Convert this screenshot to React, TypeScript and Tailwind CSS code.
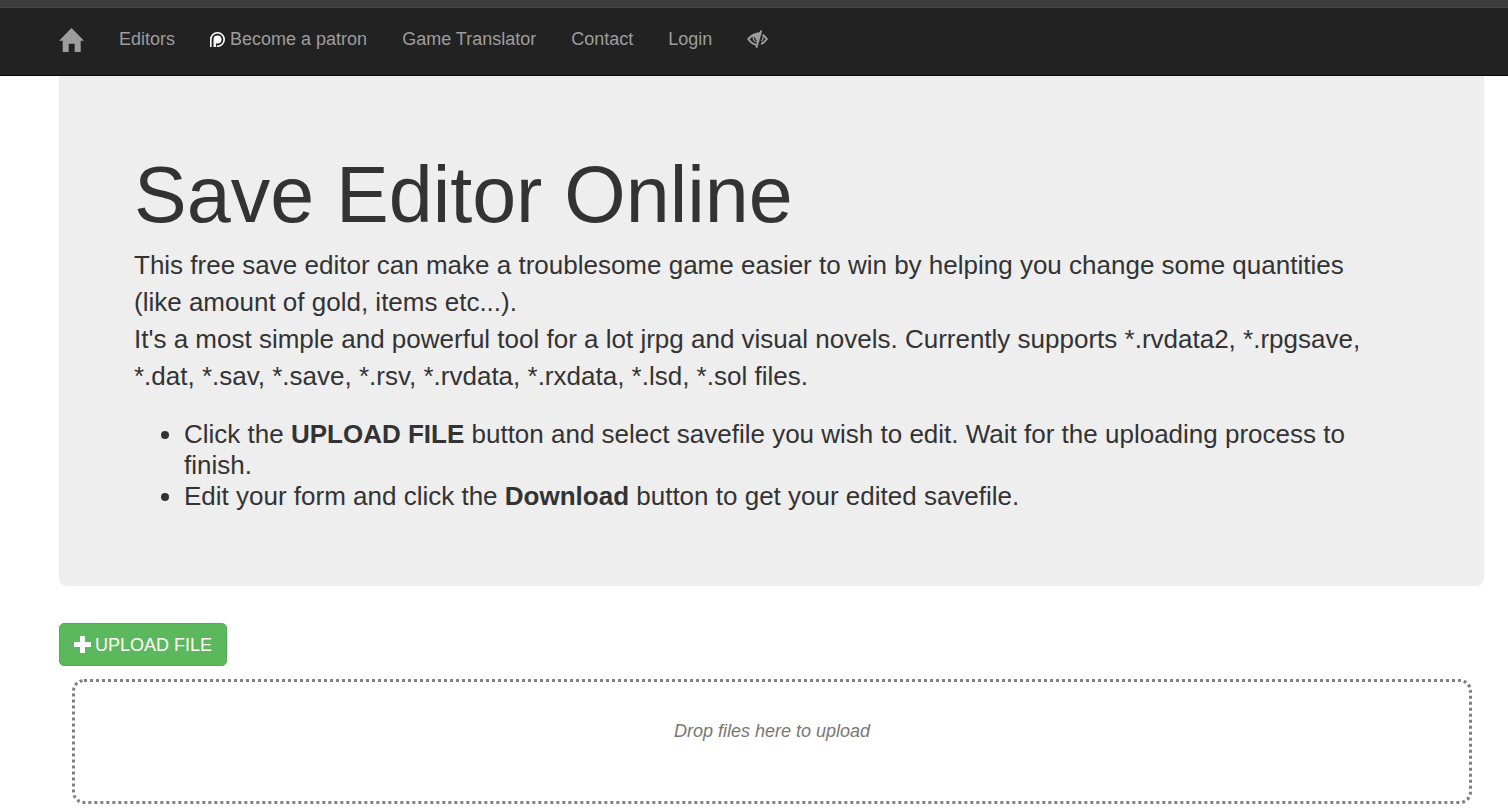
import type { ReactNode } from 'react';

const links = ['Game Translator', 'Contact', 'Login'];

function HomeIcon() {
  return (
    <svg viewBox="0 0 25 24" className="w-[25px] h-6" fill="currentColor" aria-hidden="true">
      <path d="M12.5 0 25 12.7h-3.3V24h-6v-8.3h-6V24h-6V12.7H0z" />
    </svg>
  );
}

function PatreonIcon() {
  return (
    <svg viewBox="0 0 15 15" className="w-[15px] h-[15px] text-white" aria-hidden="true">
      <path d="M.8 15V7.500A6.700 6.700 0 1 1 7.500 14.200H6.800" fill="none" stroke="currentColor" strokeWidth="1.6" />
      <path d="M3.500 15V7.500a4 4 0 1 1 4 4c-.6 0-1.100-.1-1.500-.3V15z" fill="currentColor" />
    </svg>
  );
}

function EyeCloseIcon() {
  return (
    <svg viewBox="0 0 21 18" className="w-[21px] h-[18px]" fill="none" stroke="currentColor" aria-hidden="true">
      <path d="M7 4.500C4.700 5.600 2.900 7.200 1.300 9c1.800 2.600 4.500 5.200 8 5.800M15.700 4.700C17.400 5.900 18.700 7.500 19.800 9c-1.400 2-3.300 4-5.600 5.100" strokeWidth="2" />
      <path d="M13.700 2.300 10.800 12.500C7.400 12.300 5.600 10.200 5.600 7.900c0-.9.200-1.700.6-2.500L4 6.200c2.600-2.600 5.900-4.200 9.700-3.900z" fill="currentColor" stroke="none" />
      <path d="M7.500 7.200c-.2 1.600.7 3 2.200 3.600" stroke="#222" strokeWidth="1.100" />
      <path d="M14.200.4 9.400 17.700" strokeWidth="2" />
      <path d="M15.900 6.500c.3 1.800-.3 3.400-1.700 4.600" strokeWidth="1.200" />
    </svg>
  );
}

function NavLink({ children }: { children: ReactNode }) {
  return (
    <a href="#" className="flex items-center gap-[5px] whitespace-nowrap hover:text-white">
      {children}
    </a>
  );
}

export default function App() {
  return (
    <div className="bg-white font-['Liberation_Sans',Arial,sans-serif] text-lg text-[#333]">
      <div className="h-2 border-b border-[#484848] bg-[#3c3c3c]" />

      <nav className="border-b border-[#080808] bg-[#222] pt-[19px] pb-[23px] pl-[59px] pr-6 text-[#9d9d9d]">
        <div className="flex items-start gap-[35px] leading-6">
          <a href="#" aria-label="Home" className="pt-px hover:text-white">
            <HomeIcon />
          </a>
          <NavLink>Editors</NavLink>
          <NavLink>
            <PatreonIcon />
            Become a patron
          </NavLink>
          {links.map((link) => (
            <NavLink key={link}>{link}</NavLink>
          ))}
          <a href="#" aria-label="Hide images" className="pt-[3px] hover:text-white">
            <EyeCloseIcon />
          </a>
        </div>
      </nav>

      <main className="ml-[59px] mr-6 pb-2">
        <header className="rounded-b-lg bg-[#eee] pt-[75px] pr-24 pb-[74px] pl-[75px] text-[26px]">
          <h1 className="mb-[9px] text-[79px] leading-[87px] font-medium">Save Editor Online</h1>
          <p className="mb-6 leading-[37px]">
            This free save editor can make a troublesome game easier to win by helping you change some quantities
            (like amount of gold, items etc...).
            <br />
            It's a most simple and powerful tool for a lot jrpg and visual novels. Currently supports *.rvdata2,
            *.rpgsave, *.dat, *.sav, *.save, *.rsv, *.rvdata, *.rxdata, *.lsd, *.sol files.
          </p>
          <ul className="list-disc pl-[50px] leading-[31px]">
            <li>
              Click the <b>UPLOAD FILE</b> button and select savefile you wish to edit. Wait for the uploading
              process to finish.
            </li>
            <li>
              Edit your form and click the <b>Download</b> button to get your edited savefile.
            </li>
          </ul>
        </header>

        <button
          type="button"
          className="mt-[37px] flex h-[43px] items-center gap-1 rounded-[5px] border border-[#4cae4c] bg-[#5cb85c] px-3.5 text-white"
        >
          <svg viewBox="0 0 17 17" className="h-[17px] w-[17px]" fill="currentColor" aria-hidden="true">
            <path d="M6 0h5v6h6v5h-6v6H6v-6H0V6h6z" />
          </svg>
          UPLOAD FILE
        </button>

        <div className="ml-[13px] mr-3 mt-[13px] flex h-[125px] items-center justify-center rounded-xl border-3 border-dotted border-[#808080] pb-[22px] italic text-[#777]">
          Drop files here to upload
        </div>
      </main>
    </div>
  );
}
